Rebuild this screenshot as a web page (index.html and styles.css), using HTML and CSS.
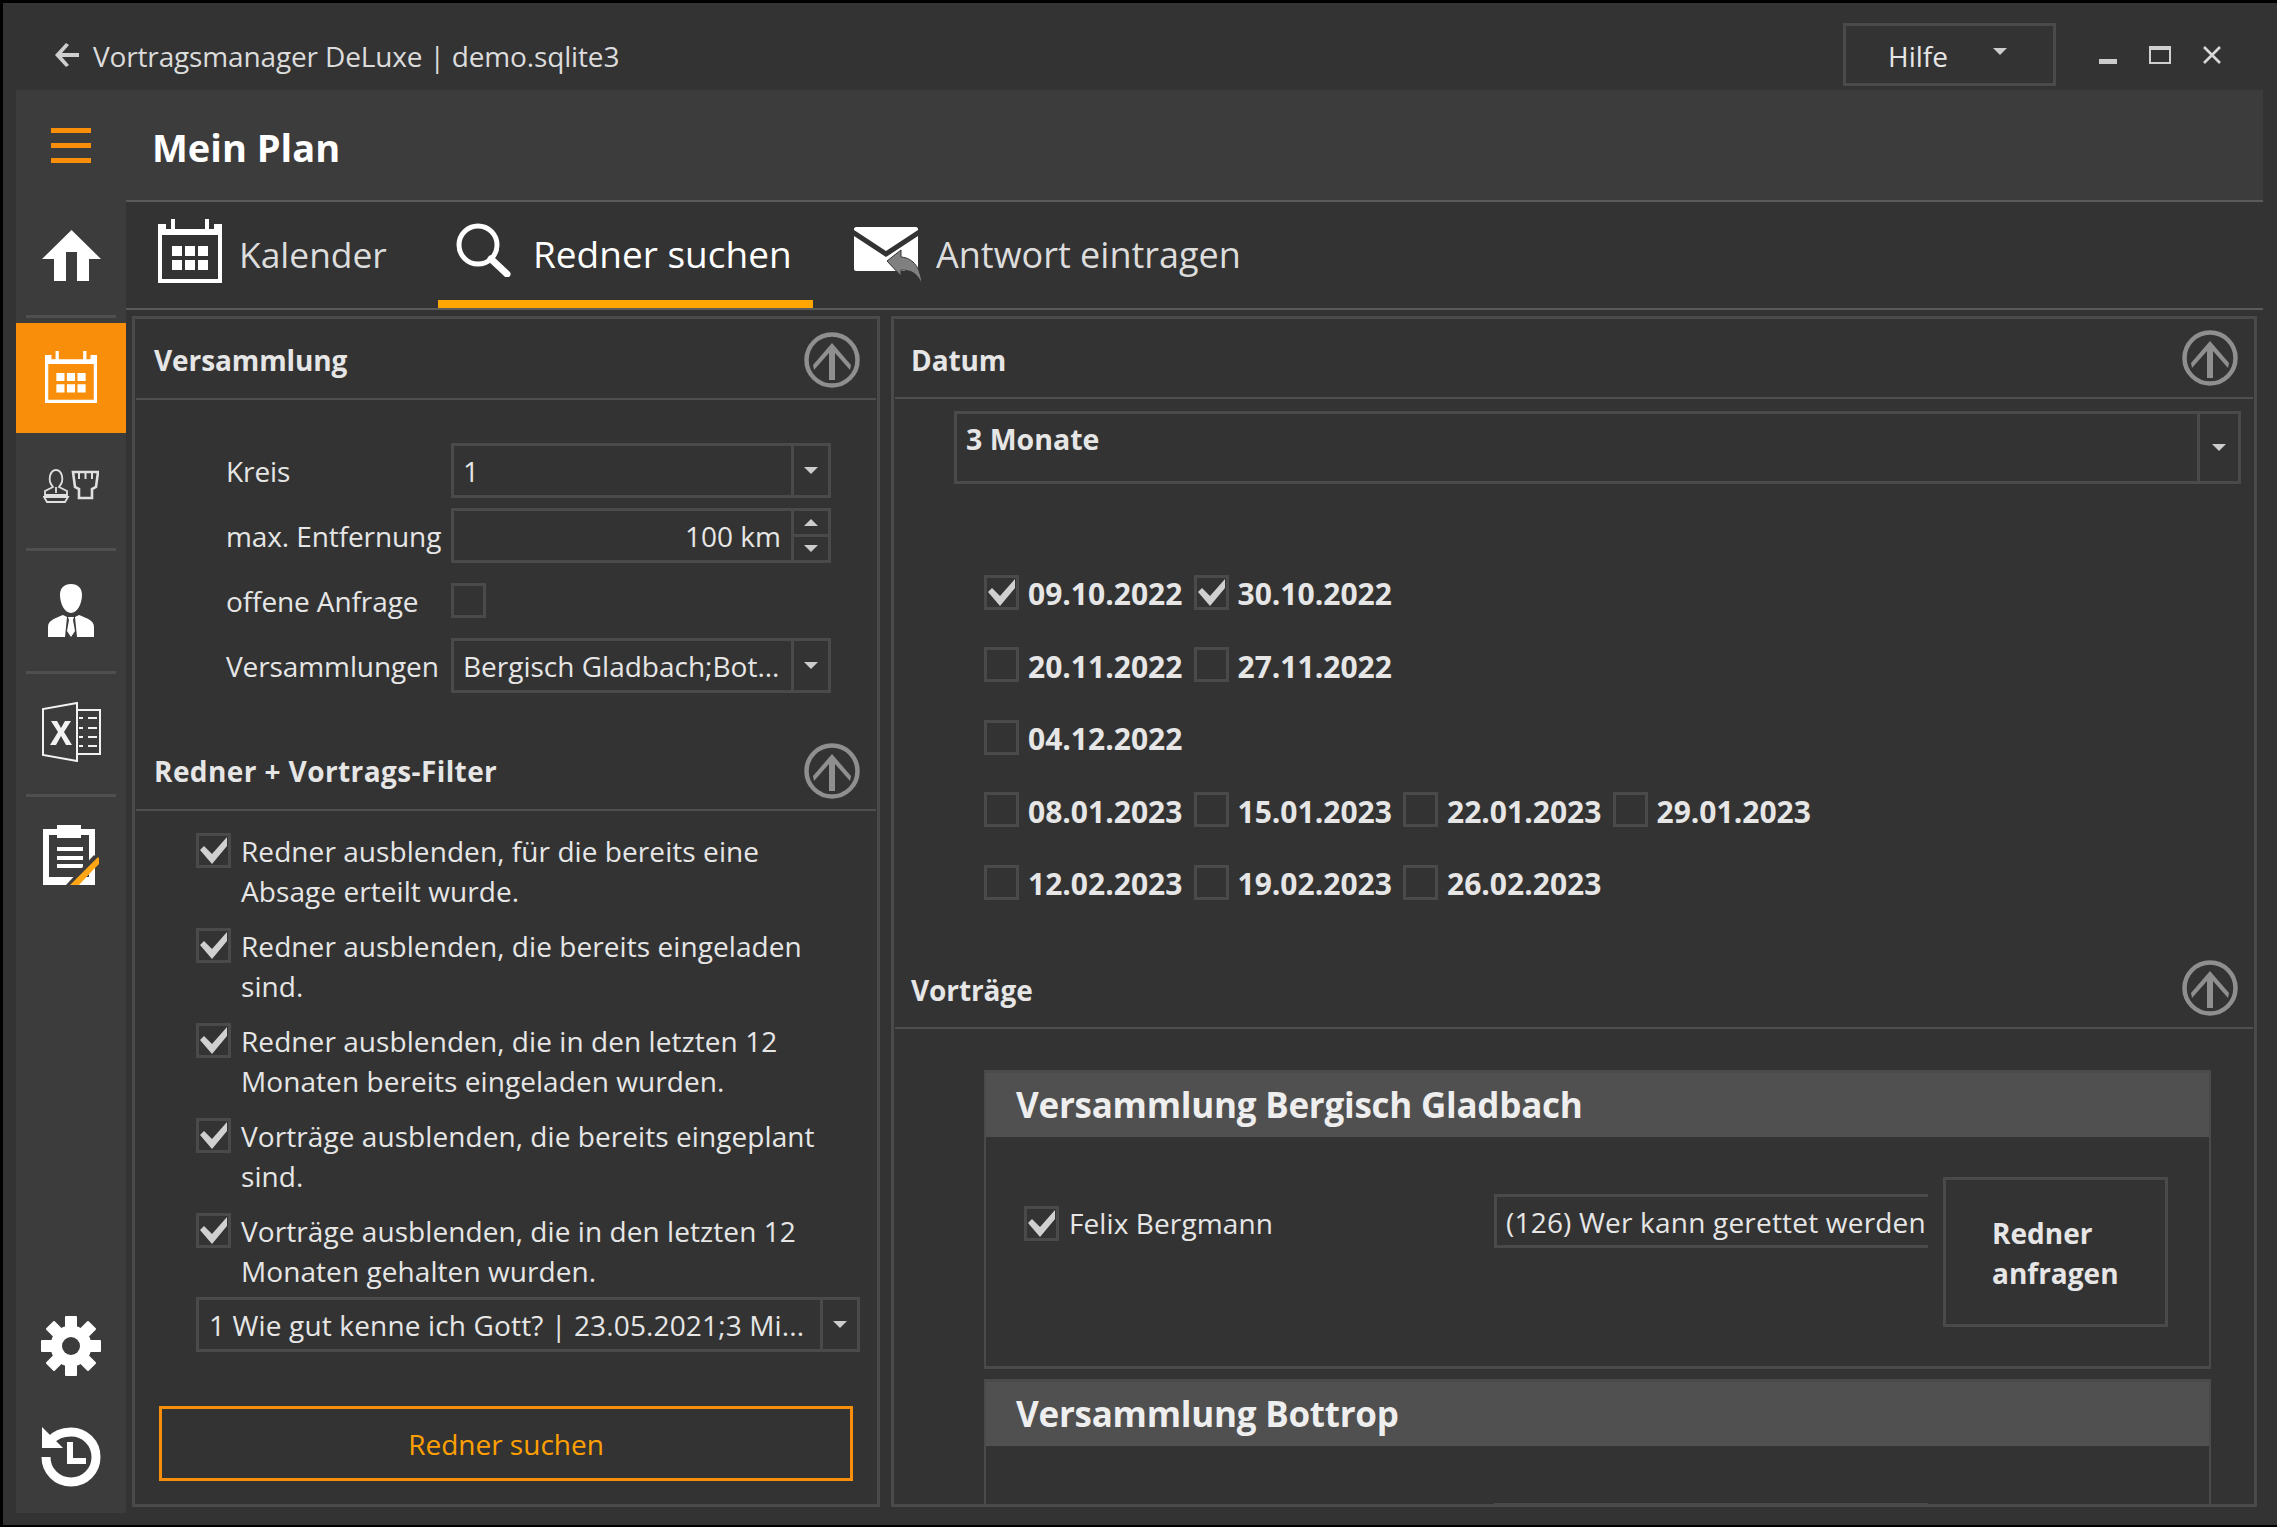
FILE: index.html
```html
<!DOCTYPE html>
<html lang="de">
<head>
  <meta charset="UTF-8">
  <title>Vortragsmanager DeLuxe</title>
  <link rel="stylesheet" href="styles.css">
</head>
<body>
  <svg class="icon-defs" aria-hidden="true">
    <symbol id="i-calendar" viewBox="0 0 64 64">
      <path fill="currentColor" fill-rule="evenodd" d="M0 5h8v5h5V0h4v10h30V0h4v10h5V5h8v59H0zM4 16v44h56V16z"/>
      <path fill="currentColor" d="M14 27h10v10H14zM27 27h10v10H27zM40 27h10v10H40zM14 41h10v10H14zM27 41h10v10H27zM40 41h10v10H40z"/>
    </symbol>
    <symbol id="i-up" viewBox="0 0 56 56">
      <ellipse cx="28" cy="28" rx="25.5" ry="25.5" fill="none" stroke="currentColor" stroke-width="4.5"/>
      <path fill="currentColor" d="M28 11l19 22-1 5-15-17v27h-6V21L10 38l-1-5z"/>
    </symbol>
    <symbol id="i-check" viewBox="0 0 35 35">
      <polygon fill="currentColor" points="4,17 8,13 16,21 31,4 31,13 16,31"/>
    </symbol>
  </svg>

  <div class="window">
    <div class="titlebar">
      <svg class="back-icon" viewBox="0 0 24 24"><path fill="#cfcfcf" d="M11 0l3 2-7 8h17v4H7l7 8-3 2L0 12z"/></svg>
      <span class="app-title">Vortragsmanager DeLuxe | demo.sqlite3</span>
      <div class="help-btn"><span>Hilfe</span><i class="caret caret-wide"></i></div>
      <div class="win-btns">
        <i class="win-min"></i>
        <i class="win-max"></i>
        <svg class="win-close" viewBox="0 0 18 18"><path stroke="#d8d8d8" stroke-width="2.6" d="M1 1l16 16M17 1L1 17"/></svg>
      </div>
    </div>

    <div class="main">
      <nav class="sidebar">
        <div class="nav-item nav-menu"><div class="hamburger"><i></i><i></i><i></i></div></div>
        <div class="nav-item nav-home">
          <svg class="ic-home" viewBox="0 0 59 51"><path fill="#fff" d="M29.5 0L59 29H47v22H35V22H24v29H12V29H0z"/></svg>
        </div>
        <div class="nav-sep sep-first"></div>
        <div class="nav-item nav-active">
          <svg class="ic-cal-small"><use href="#i-calendar"/></svg>
        </div>
        <div class="nav-item nav-tools">
          <svg class="ic-tools" viewBox="0 0 56 36" fill="none" stroke="#e0e0e0" stroke-width="1.8">
            <path d="M10 20c-3-4-4-6-3-11 1-4 3-6 6-6s5 2 6 6c1 5 0 7-3 11l8 4v4H2v-4z"/>
            <path d="M13 20v6M1 30h24l-3 5H4z"/>
            <path stroke-width="2.6" d="M30 5h25l-2 15-4 2v9H36v-9l-4-2z"/>
            <path stroke-width="2" d="M36 6v6M42.500 6v6M49 6v6"/>
          </svg>
        </div>
        <div class="nav-sep sep-tools"></div>
        <div class="nav-item nav-person">
          <svg class="ic-person" viewBox="0 0 46 53"><path fill="#fff" d="M23 0c7 0 11 4 11 11 0 9-5 18-11 18S12 20 12 11C12 4 16 0 23 0zM20 33h6l-1 3 2 11-4 6-4-6 2-11zM15 31l4 2-2 20H0v-10c0-7 8-9 15-12zM31 31c7 3 15 5 15 12v10H29l-2-20z"/></svg>
        </div>
        <div class="nav-sep sep-person"></div>
        <div class="nav-item nav-excel">
          <svg class="ic-excel" viewBox="0 0 59 60" fill="none" stroke="#f2f2f2" stroke-width="2">
            <path d="M35 1L1 7v46l34 6z"/>
            <path d="M36 8h22v44H36"/>
            <path stroke-width="2" d="M37 16h4M46 16h9M37 26h4M46 26h9M37 35h4M46 35h9M37 44h4M46 44h9"/>
            <path stroke="none" fill="#f2f2f2" d="M9 19h6l4 7 4-7h6l-7 11 8 13h-6l-5-9-5 9H8l8-13z"/>
          </svg>
        </div>
        <div class="nav-sep sep-excel"></div>
        <div class="nav-item nav-notes">
          <svg class="ic-notes" viewBox="0 0 56 60">
            <path fill="#fff" fill-rule="evenodd" d="M0 4h14V0h24v4h14v56H0zM6 10v42h40V10z"/>
            <path fill="#fff" d="M14 4h24v9H14zM14 22h26v4H14zM14 31h26v4H14zM14 39h26v4H14z"/>
            <path fill="#3c3c3c" d="M23 60l28-30 5 5-27 25z"/>
            <path fill="#ffa615" d="M27 60l22-22 6-6c1 1 2 5 1 7l-6 6-14 15z"/>
          </svg>
        </div>
        <div class="nav-item nav-gear">
          <svg class="ic-gear" viewBox="0 0 60 60">
            <g fill="#fff">
              <rect x="24" y="0" width="12" height="60" rx="1"/>
              <rect x="24" y="0" width="12" height="60" rx="1" transform="rotate(45 30 30)"/>
              <rect x="24" y="0" width="12" height="60" rx="1" transform="rotate(90 30 30)"/>
              <rect x="24" y="0" width="12" height="60" rx="1" transform="rotate(135 30 30)"/>
            </g>
            <circle cx="30" cy="30" r="15" fill="none" stroke="#fff" stroke-width="11"/>
            <circle cx="30" cy="30" r="9" fill="#3c3c3c"/>
          </svg>
        </div>
        <div class="nav-item nav-history">
          <svg class="ic-history" viewBox="0 0 60 60">
            <path fill="none" stroke="#fff" stroke-width="9" d="M9 14C14 8 22 5 30 5c14 0 25 11 25 25S44 55 30 55 5 44 5 30"/>
            <path fill="#fff" d="M1 0l21 21H1z"/>
            <path fill="none" stroke="#fff" stroke-width="6" d="M29 15v19h16"/>
          </svg>
        </div>
      </nav>

      <div class="content">
        <header class="page-head"><h1>Mein Plan</h1></header>

        <div class="tabs">
          <div class="tab tab-kalender">
            <svg class="tab-cal"><use href="#i-calendar"/></svg>
            <span>Kalender</span>
          </div>
          <div class="tab tab-active">
            <svg class="tab-search" viewBox="0 0 55 54" fill="none" stroke="#fff">
              <circle cx="22" cy="22" r="19" stroke-width="5"/>
              <path stroke-width="7" stroke-linecap="round" d="M35 36l16 15"/>
            </svg>
            <span>Redner suchen</span>
          </div>
          <div class="tab tab-answer">
            <svg class="tab-mail" viewBox="0 0 68 58">
              <path fill="#fff" d="M2 0h60c1 0 2 1 2 2v1L32 24 0 3V2c0-1 1-2 2-2zM0 9l32 21L64 9v33c0 1-1 2-2 2H2c-1 0-2-1-2-2z"/>
              <path fill="#808080" d="M33 34l14-11v7c13 1 20 12 21 28-4-11-10-15-21-15v6z" stroke="#333" stroke-width="1"/>
            </svg>
            <span>Antwort eintragen</span>
          </div>
        </div>

        <div class="panels">
          <section class="panel panel-left">
            <div class="section-head">
              <h2>Versammlung</h2>
              <svg class="up-icon"><use href="#i-up"/></svg>
            </div>
            <div class="form-grid">
              <label>Kreis</label>
              <div class="field"><span class="field-text">1</span><span class="field-btn"><i class="caret"></i></span></div>
              <label>max. Entfernung</label>
              <div class="field">
                <span class="field-text field-num">100 km</span>
                <span class="field-btn field-spin"><span><i class="caret caret-up"></i></span><span><i class="caret"></i></span></span>
              </div>
              <label>offene Anfrage</label>
              <div class="checkbox"></div>
              <label>Versammlungen</label>
              <div class="field"><span class="field-text">Bergisch Gladbach;Bot...</span><span class="field-btn"><i class="caret"></i></span></div>
            </div>

            <div class="section-head head-filter">
              <h2>Redner + Vortrags-Filter</h2>
              <svg class="up-icon"><use href="#i-up"/></svg>
            </div>
            <div class="check-list">
              <div class="check-item">
                <div class="checkbox"><svg><use href="#i-check"/></svg></div>
                <span>Redner ausblenden, für die bereits eine<br>Absage erteilt wurde.</span>
              </div>
              <div class="check-item">
                <div class="checkbox"><svg><use href="#i-check"/></svg></div>
                <span>Redner ausblenden, die bereits eingeladen<br>sind.</span>
              </div>
              <div class="check-item">
                <div class="checkbox"><svg><use href="#i-check"/></svg></div>
                <span>Redner ausblenden, die in den letzten 12<br>Monaten bereits eingeladen wurden.</span>
              </div>
              <div class="check-item">
                <div class="checkbox"><svg><use href="#i-check"/></svg></div>
                <span>Vorträge ausblenden, die bereits eingeplant<br>sind.</span>
              </div>
              <div class="check-item">
                <div class="checkbox"><svg><use href="#i-check"/></svg></div>
                <span>Vorträge ausblenden, die in den letzten 12<br>Monaten gehalten wurden.</span>
              </div>
            </div>
            <div class="field field-talk"><span class="field-text">1 Wie gut kenne ich Gott? | 23.05.2021;3 Mi...</span><span class="field-btn"><i class="caret"></i></span></div>
            <button class="search-btn">Redner suchen</button>
          </section>

          <section class="panel panel-right">
            <div class="section-head head-date">
              <h2>Datum</h2>
              <svg class="up-icon"><use href="#i-up"/></svg>
            </div>
            <div class="field field-range"><span class="field-text">3 Monate</span><span class="field-btn"><i class="caret"></i></span></div>

            <div class="date-grid">
              <div class="date"><div class="checkbox"><svg><use href="#i-check"/></svg></div><span>09.10.2022</span></div>
              <div class="date"><div class="checkbox"><svg><use href="#i-check"/></svg></div><span>30.10.2022</span></div>
              <div class="date date-break"><div class="checkbox"></div><span>20.11.2022</span></div>
              <div class="date"><div class="checkbox"></div><span>27.11.2022</span></div>
              <div class="date date-break"><div class="checkbox"></div><span>04.12.2022</span></div>
              <div class="date date-break"><div class="checkbox"></div><span>08.01.2023</span></div>
              <div class="date"><div class="checkbox"></div><span>15.01.2023</span></div>
              <div class="date"><div class="checkbox"></div><span>22.01.2023</span></div>
              <div class="date"><div class="checkbox"></div><span>29.01.2023</span></div>
              <div class="date date-break"><div class="checkbox"></div><span>12.02.2023</span></div>
              <div class="date"><div class="checkbox"></div><span>19.02.2023</span></div>
              <div class="date"><div class="checkbox"></div><span>26.02.2023</span></div>
            </div>

            <div class="section-head head-talks">
              <h2>Vorträge</h2>
              <svg class="up-icon"><use href="#i-up"/></svg>
            </div>

            <div class="group">
              <h3>Versammlung Bergisch Gladbach</h3>
              <div class="group-body">
                <div class="speaker"><div class="checkbox"><svg><use href="#i-check"/></svg></div><span>Felix Bergmann</span></div>
                <div class="talk-box">(126) Wer kann gerettet werden</div>
                <button class="ask-btn">Redner<br>anfragen</button>
              </div>
            </div>
            <div class="group">
              <h3>Versammlung Bottrop</h3>
              <div class="group-body">
                <div class="speaker"></div>
                <div class="talk-box"></div>
              </div>
            </div>
          </section>
        </div>
      </div>
    </div>
  </div>
</body>
</html>
```

FILE: styles.css
```css
* { box-sizing: border-box; }
html, body { margin: 0; height: 100%; }
body { background: #333; color: #e6e6e6; font-family: "Open Sans", "Noto Sans", sans-serif; font-size: 28px; overflow: hidden; }
.icon-defs { position: absolute; width: 0; height: 0; }
svg { display: block; flex: none; }
i { display: block; }

.window { width: 2277px; height: 1527px; border-top: 3px solid #000; border-left: 3px solid #000; border-bottom: 2px solid #000; display: flex; flex-direction: column; }

/* Titelleiste */
.titlebar { height: 87px; flex: none; display: flex; align-items: center; padding: 16px 0 0 52px; }
.back-icon { width: 24px; height: 24px; }
.app-title { margin: 3px 0 0 14px; color: #dcdcdc; letter-spacing: -0.15px; }
.help-btn { margin-left: auto; width: 213px; height: 63px; border: 3px solid #4a4a4a; display: flex; align-items: center; padding: 3px 0 0 42px; }
.help-btn .caret-wide { margin: -9px 0 0 45px; }
.win-btns { display: flex; align-items: center; margin-left: 43px; width: 178px; }
.win-min { width: 18px; height: 5px; background: #ccc; margin: 14px 32px 0 0; }
.win-max { width: 22px; height: 18px; border: 2px solid #d0d0d0; border-top-width: 4px; margin-right: 32px; }
.win-close { width: 18px; height: 18px; }

.caret { width: 0; height: 0; border-left: 7px solid transparent; border-right: 7px solid transparent; border-top: 7px solid #ccc; }
.caret-up { border-top: 0; border-bottom: 7px solid #ccc; }

.main { flex: 1; display: flex; margin: 0 14px 12px 13px; min-height: 0; }

/* Seitenleiste */
.sidebar { width: 110px; flex: none; background: #3c3c3c; display: flex; flex-direction: column; }
.nav-item { display: flex; align-items: center; justify-content: center; flex: none; }
.nav-menu, .nav-home, .nav-active { height: 110px; }
.nav-tools { height: 104px; }
.nav-person { height: 118px; }
.nav-excel, .nav-notes { height: 116px; }
.nav-gear { height: 111px; margin-top: auto; }
.nav-history { height: 112px; }
.nav-active { background: #f98e0a; color: #fff; }
.nav-sep { height: 3px; margin: 0 10px; background: #4f4f4f; flex: none; }
.sep-first { margin-top: 5px; margin-bottom: 5px; }
.sep-tools { margin-top: 11px; }
.sep-person { margin-top: 2px; }
.sep-excel { margin-top: 4px; }
.hamburger { width: 40px; display: flex; flex-direction: column; gap: 10px; }
.hamburger i { height: 5px; background: #f98e0a; }
.ic-home { width: 59px; height: 51px; }
.ic-cal-small { width: 52px; height: 52px; margin-top: -2px; }
.ic-tools { width: 56px; height: 36px; }
.ic-person { width: 46px; height: 53px; }
.ic-excel { width: 59px; height: 60px; }
.ic-notes { width: 56px; height: 60px; }
.ic-gear { width: 60px; height: 60px; }
.ic-history { width: 60px; height: 60px; }

.content { flex: 1; min-width: 0; display: flex; flex-direction: column; }
.page-head { height: 112px; flex: none; background: #3c3c3c; border-bottom: 2px solid #5a5a5a; display: flex; align-items: center; padding: 4px 0 0 26px; }
h1 { margin: 0; font-size: 38px; font-weight: 700; color: #fff; }

/* Tabs */
.tabs { height: 108px; flex: none; display: flex; border-bottom: 2px solid #5a5a5a; }
.tab { display: flex; align-items: center; font-size: 36px; color: #ddd; height: 106px; }
.tab-kalender { width: 312px; padding: 0 0 2px 32px; gap: 17px; font-size: 35.400px; }
.tab-active { width: 375px; padding: 4px 0 0 18px; gap: 22px; color: #fff; font-size: 37px; border-bottom: 8px solid #ffa500; }
.tab-answer { padding: 0 0 2px 41px; gap: 14px; }
.tab-cal { width: 64px; height: 64px; color: #fff; margin-top: -6px; }
.tab-search { width: 55px; height: 54px; margin-top: -6px; }
.tab-mail { width: 68px; height: 58px; margin-top: 4px; }

.panels { flex: 1; min-height: 0; display: flex; gap: 11px; padding: 6px; }
.panel { border: 3px solid #4a4a4a; overflow: hidden; display: flex; flex-direction: column; }
.panel-left { width: 748px; flex: none; }
.panel-right { flex: 1; min-width: 0; }

.section-head { height: 81px; flex: none; margin: 0 1px; border-bottom: 2px solid #4f4f4f; display: flex; align-items: center; justify-content: space-between; padding: 3px 16px 0 18px; }
h2 { margin: 0; font-size: 28px; font-weight: 700; color: #e6e6e6; letter-spacing: -0.1px; }
.up-icon { width: 56px; height: 56px; color: #8f8f8f; }
.head-filter { margin-top: 37px; }
.head-filter h2 { letter-spacing: 0.4px; }
.head-date { height: 80px; padding: 3px 15px 0 16px; }
.head-talks { height: 79px; margin-top: 31.500px; padding: 3px 15px 0 16px; }
.panel-right .up-icon { margin-top: -4px; }

/* Formular */
.form-grid { display: grid; grid-template-columns: 225px 380px; grid-auto-rows: 55px; row-gap: 10px; align-items: center; margin: 43px 0 0 91px; }
label { white-space: nowrap; letter-spacing: -0.1px; }
.field { height: 55px; border: 3px solid #4a4a4a; display: flex; align-items: center; }
.field-text { flex: 1; padding-left: 9px; white-space: nowrap; overflow: hidden; }
.field-num { text-align: right; padding: 0 10px 0 0; }
.field-btn { width: 37px; height: 100%; flex: none; border-left: 3px solid #4a4a4a; display: flex; align-items: center; justify-content: center; }
.field-spin { flex-direction: column; }
.field-spin span { flex: 1; width: 100%; display: flex; align-items: center; justify-content: center; }
.field-spin span + span { border-top: 3px solid #4a4a4a; }
.checkbox { width: 35px; height: 35px; border: 3px solid #4a4a4a; flex: none; position: relative; color: #d0d0d0; }
.checkbox svg { position: absolute; left: -3px; top: -3px; width: 35px; height: 35px; }

/* Filterliste */
.check-list { display: flex; flex-direction: column; gap: 15px; margin: 20px 0 0 61px; }
.check-item { display: flex; gap: 10px; line-height: 40px; letter-spacing: 0.07px; }
.check-item .checkbox { margin-top: 2px; }
.field-talk { width: 664px; margin: 6px 0 0 61px; flex: none; letter-spacing: 0.15px; }
.field-talk .field-text { padding-left: 10px; }
.search-btn { width: 694px; height: 75px; margin: 54px 0 0 24px; flex: none; background: none; border: 3px solid #f98e0a; color: #ffa000; font: inherit; }

/* rechte Seite */
.field-range { height: 73px; width: 1287px; margin: 12px 0 0 60px; flex: none; align-items: flex-start; }
.field-range .field-text { font-weight: 700; font-size: 28.500px; padding: 6px 0 0 9px; }
.field-range .field-btn { width: 41px; }
.date-grid { display: grid; grid-template-columns: repeat(4, 209.500px); grid-auto-rows: 72.500px; margin: 72px 0 0 90px; flex: none; }
.date { display: flex; align-items: center; gap: 9px; font-weight: 700; font-size: 30px; white-space: nowrap; }
.date span { padding-top: 3px; }
.date-break { grid-column-start: 1; }

.group { width: 1227px; height: 299px; flex: none; margin: 41px 0 0 90px; border: 2px solid #4a4a4a; border-width: 3px 2px; display: flex; flex-direction: column; }
.group + .group { margin-top: 10px; }
.group h3 { margin: 0; height: 64px; flex: none; background: #505050; font-size: 35px; font-weight: 700; color: #eee; display: flex; align-items: center; padding: 0 0 2px 30px; letter-spacing: -0.25px; }
.group-body { flex: 1; display: flex; align-items: flex-start; padding: 40px 0 0 38px; }
.speaker { width: 470px; display: flex; gap: 10px; align-items: center; padding-top: 27px; letter-spacing: 0.1px; }
.talk-box { width: 434px; height: 54px; margin-top: 17px; border: 3px solid #4a4a4a; border-right: 0; padding: 2px 0 0 9px; display: flex; align-items: center; white-space: nowrap; overflow: hidden; letter-spacing: 0.2px; }
.ask-btn { width: 225px; height: 150px; margin-left: 15px; background: none; border: 3px solid #4a4a4a; color: #e6e6e6; font: inherit; font-weight: 700; line-height: 40px; text-align: left; padding: 2px 0 0 46px; }
```
